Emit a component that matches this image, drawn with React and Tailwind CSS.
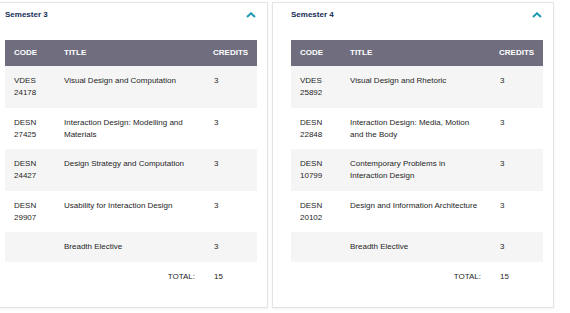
const SEMESTERS = [
  {
    name: "Semester 3",
    total: 15,
    courses: [
      { code: ["VDES", "24178"], title: "Visual Design and Computation", credits: 3 },
      { code: ["DESN", "27425"], title: "Interaction Design: Modelling and Materials", credits: 3 },
      { code: ["DESN", "24427"], title: "Design Strategy and Computation", credits: 3 },
      { code: ["DESN", "29907"], title: "Usability for Interaction Design", credits: 3 },
      { code: null, title: "Breadth Elective", credits: 3 },
    ],
  },
  {
    name: "Semester 4",
    total: 15,
    courses: [
      { code: ["VDES", "25892"], title: "Visual Design and Rhetoric", credits: 3 },
      { code: ["DESN", "22848"], title: "Interaction Design: Media, Motion and the Body", credits: 3 },
      { code: ["DESN", "10799"], title: "Contemporary Problems in Interaction Design", credits: 3 },
      { code: ["DESN", "20102"], title: "Design and Information Architecture", credits: 3 },
      { code: null, title: "Breadth Elective", credits: 3 },
    ],
  },
];

function Chevron() {
  return (
    <svg width="10" height="6" viewBox="0 0 10 6" className="mr-[1px]">
      <path d="M1 5 L5 1.3 L9 5" fill="none" stroke="#1c9ab3" strokeWidth="2" />
    </svg>
  );
}

function SemesterCard({ sem }) {
  return (
    <div className="w-[282px] h-[306px] shrink-0 border border-[#e4e4e4] bg-white shadow-[0_1px_2px_rgba(0,0,0,0.06)] pl-[18px] pr-[10px]">
      <div className="flex h-[24px] items-center justify-between">
        <span className="text-[8px] font-bold text-[#142d57]">{sem.name}</span>
        <Chevron />
      </div>
      <table className="mt-[13px] w-[252px] table-fixed border-collapse text-left">
        <colgroup>
          <col className="w-[50px]" />
          <col className="w-[150px]" />
          <col className="w-[52px]" />
        </colgroup>
        <thead>
          <tr className="h-[26px] bg-[#6f6d7e] text-[8px] font-bold text-white">
            <th className="pl-[9px]">CODE</th>
            <th className="pl-[9px]">TITLE</th>
            <th className="pl-[8px]">CREDITS</th>
          </tr>
        </thead>
        <tbody className="text-[8px] leading-[12px] text-[#262626]">
          {sem.courses.map((c, i) => (
            <tr key={i} className={i % 2 === 0 ? "bg-[#f5f5f5]" : "bg-white"}>
              <td className="pt-[9px] pb-[8.5px] pl-[9px] align-top">
                {c.code && (
                  <>
                    {c.code[0]}
                    <br />
                    {c.code[1]}
                  </>
                )}
              </td>
              <td className="pt-[9px] pb-[8.5px] pl-[9px] pr-[9px] align-top">{c.title}</td>
              <td className="pt-[9px] pb-[8.5px] pl-[9px] align-top">{c.credits}</td>
            </tr>
          ))}
          <tr>
            <td colSpan={2} className="pt-[9px] pr-[10px] text-right">
              TOTAL:
            </td>
            <td className="pt-[9px] pl-[9px]">{sem.total}</td>
          </tr>
        </tbody>
      </table>
    </div>
  );
}

export default function App() {
  return (
    <div className="h-[313px] w-[570px] overflow-hidden bg-white font-['Liberation_Sans',Arial,sans-serif]">
      <div className="ml-[-14px] flex gap-[4px] pt-[2px]">
        {SEMESTERS.map((s) => (
          <SemesterCard key={s.name} sem={s} />
        ))}
      </div>
    </div>
  );
}
